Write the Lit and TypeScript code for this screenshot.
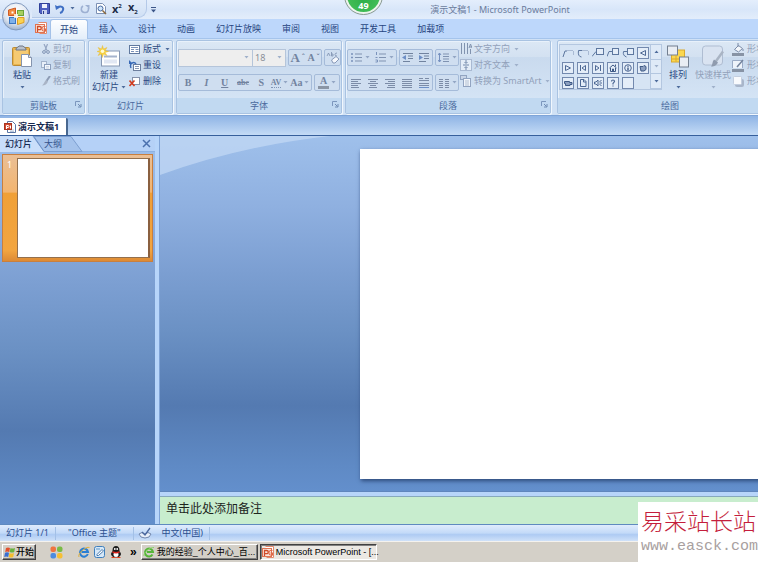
import { LitElement, html, svg, css, TemplateResult } from "lit";
import { customElement } from "lit/decorators.js";

type Art = ReturnType<typeof svg>;

const icon = (w: number, h: number, art: Art): TemplateResult =>
  html`<svg class="icon" width=${w} height=${h} viewBox="0 0 ${w} ${h}" aria-hidden="true">${art}</svg>`;

const caret = (kind = "") =>
  html`<svg class="caret ${kind}" width="5" height="3" viewBox="0 0 5 3" aria-hidden="true"><path d="M0.5 0h4L2.5 2.6z" fill="currentColor" /></svg>`;

const launcher = icon(7, 7, svg`<path d="M.5 5V.5H5" fill="none" stroke="#7c97bd"/><path d="M3 3l2.500 2.500M6 3v3H3" fill="none" stroke="#6f8bb3"/>`);

const pptIcon = icon(12, 12, svg`
  <path d="M3.500 .5h8v11h-7" fill="#fff" stroke="#e3886c"/>
  <rect x=".5" y="2.500" width="9" height="8" fill="#fbe6dd" stroke="#df7352"/>
  <path d="M2.500 10V4.500h2.200a1.600 1.600 0 0 1 0 3.200H2.500" fill="none" stroke="#cf4a28" stroke-width="1.300"/>
  <path d="M10.500 4.500a2.500 2.500 0 1 0 0 4.500V7H8.500" fill="none" stroke="#df6644" stroke-width="1.100"/>`);

const docIcon = icon(12, 12, svg`
  <path d="M3.500 .5h5l3 3v8h-8z" fill="#fff" stroke="#5a76a5"/>
  <path d="M6 9h4M6 10.500h4" stroke="#9db1d0" stroke-width=".7"/>
  <rect x=".5" y="2.500" width="7" height="6" fill="#d4492e" stroke="#a93420"/>
  <path d="M2.500 8V4.500h1.500a1 1 0 0 1 0 2H2.500M6.500 4.500v3" fill="none" stroke="#fff"/>`);

const art = {
  save: icon(11, 11, svg`<path d="M.5 .5h10v10h-9l-1-1z" fill="#4d5fc0" stroke="#2f3f98"/><rect x="3" y="1" width="5" height="4" fill="#eef2fc"/><rect x="3" y="7" width="5" height="4" fill="#c9d2ee"/><rect x="4" y="8" width="1" height="3" fill="#283a8c"/>`),
  undo: icon(10, 10, svg`<path d="M2 3.500c4-2 7-.5 6 2.500-.4 1.500-1.500 2.500-3 3" fill="none" stroke="#3f6fc4" stroke-width="2"/><path d="M0 1l1 5 4-2.500z" fill="#3f6fc4"/>`),
  redo: icon(10, 10, svg`<path d="M3 2C.5 3.500 .5 8 4.500 8.500S9 5 8 4" fill="none" stroke="#9db0d2" stroke-width="1.600"/><path d="M5 1h4.500v4z" fill="#9db0d2"/>`),
  preview: icon(12, 12, svg`<path d="M1.500 .5h6l3 3v7h-9z" fill="#fff" stroke="#7c90b4"/><circle cx="5.500" cy="5.500" r="2.500" fill="#cfe5fb" stroke="#46689e"/><path d="M7.500 7.500l3.500 3.500" stroke="#8a6a40" stroke-width="1.500"/>`),
  paste: icon(22, 23, svg`<rect x="1.500" y="2.500" width="17" height="18" rx="1" fill="#e9b44c" stroke="#ba8a35"/><rect x="3" y="5" width="14" height="14" fill="#f5ca72"/><path d="M5 4c0-1.500 2-1.500 3-3h4c1 1.500 3 1.500 3 3v1H5z" fill="#b8c0cc" stroke="#6c7583"/><path d="M10.500 9.500h7l3 3v9h-10z" fill="#fff" stroke="#8494ae"/><path d="M17.500 9.500v3h3" fill="#dbe4f2" stroke="#8494ae"/>`),
  cut: icon(10, 10, svg`<path d="M3 0l3 6.500M6.500 0L4 6.500" stroke="#95a6c2" stroke-width="1.200"/><circle cx="3" cy="8" r="1.400" fill="none" stroke="#8195b5"/><circle cx="7" cy="8" r="1.400" fill="none" stroke="#8195b5"/>`),
  copy: icon(10, 10, svg`<rect x=".5" y="1.500" width="5" height="6" fill="#e9f0f9" stroke="#a3b3cb"/><rect x="3.500" y="4.500" width="6" height="5" fill="#f3f7fc" stroke="#8c9fbd"/><path d="M5 6.500h3M5 8h3" stroke="#b3c0d4" stroke-width=".6"/>`),
  painter: icon(10, 10, svg`<path d="M9 0L5.500 5" stroke="#8d9cb5" stroke-width="2"/><path d="M5 4l2 1.500C6 8 4 9.500 1 9.500 3 8 3 6 5 4z" fill="#a9b4c6"/>`),
  newSlide: icon(24, 22, svg`<rect x="4.500" y="5.500" width="18" height="15" fill="#fff" stroke="#8798b4"/><rect x="7" y="10" width="13" height="2" fill="#a6b4cd"/><rect x="7" y="14" width="13" height="4" fill="#e1e7f3"/><path d="M5.500 0l1 3.500L10 2 8 5l3.500 1L8 7l2 3-3.500-1.500-1 3.500-1-3.500L1 10l2-3-3-1 3-1-2-3 3.500 1.500z" fill="#f7d343" stroke="#e3b32a" stroke-width=".4"/><circle cx="5.500" cy="5.800" r="1.800" fill="#fffbd5"/>`),
  layout: icon(12, 11, svg`<rect x=".5" y="1.500" width="10" height="8" fill="#fff" stroke="#60799f"/><path d="M2 3.500h7M2 5.500h3M2 7.500h3M6.500 5.500h3M6.500 7.500h3" stroke="#7890b8"/>`),
  reset: icon(12, 11, svg`<rect x="4.500" y="4.500" width="7" height="6" fill="#fff" stroke="#6d7f9e"/><path d="M6 6.500h4M6 8.500h4" stroke="#8797b4"/><path d="M2 8c-2-5 3-7 5-4" fill="none" stroke="#3768b5" stroke-width="1.400"/><path d="M0 0v4h4z" fill="#3768b5"/>`),
  remove: icon(12, 11, svg`<rect x="3.500" y="1.500" width="7" height="7" fill="#fff" stroke="#8592ab"/><path d="M0.500 4.500l5 5.500M5.500 4.500l-5 5.500" stroke="#d23c1e" stroke-width="1.600"/>`),
  eraser: icon(14, 13, svg`<path d="M1 5l1.500-3L4 5M5.500 1v4h1.500V3H5.500M11 2q-2 0-2 1.500T11 5" stroke="#7c8faf" fill="none" stroke-width=".8"/><path d="M5.500 9L10 5.500l3 2.500-4 4H7z" fill="#f6f8fc" stroke="#8799b8"/>`),
  bullets: icon(12, 11, svg`<path d="M0 2h2M0 5.500h2M0 9h2" stroke="#7b93bb" stroke-width="1.600"/><path d="M4 2h7M4 5.500h7M4 9h7" stroke="#8093b1"/>`),
  numbers: icon(12, 11, svg`<path d="M1.500 0v3M.5 5.500h2M.5 8h2v2h-2" fill="none" stroke="#7b93bb"/><path d="M4 2h7M4 5.500h7M4 9h7" stroke="#8093b1"/>`),
  indentLess: icon(12, 11, svg`<path d="M1 1.500h10M6 4h5M6 6.500h5M1 9.500h7" stroke="#71839f" stroke-width="1.200"/><path d="M4 3v5L0 5.500z" fill="#6d8fc6"/>`),
  indentMore: icon(12, 11, svg`<path d="M1 1.500h10M6 4h5M6 6.500h5M1 9.500h7" stroke="#71839f" stroke-width="1.200"/><path d="M1 3v5l4-2.500z" fill="#6d8fc6"/>`),
  spacing: icon(12, 11, svg`<path d="M1.500 1v9M0 3l1.500-2L3 3M0 8l1.500 2L3 8" fill="none" stroke="#7590bf"/><path d="M5 2h6M5 4.500h6M5 7h6M5 9.500h6" stroke="#8093b1"/>`),
  alignLeft: icon(12, 10, svg`<path d="M1 1.500h10M1 3.500h7M1 5.500h10M1 7.500h7M1 9.500h8" stroke="#7c8ca7"/>`),
  alignCenter: icon(12, 10, svg`<path d="M1 1.500h10M3 3.500h6M1 5.500h10M3 7.500h6M2 9.500h8" stroke="#7c8ca7"/>`),
  alignRight: icon(12, 10, svg`<path d="M1 1.500h10M4 3.500h7M1 5.500h10M4 7.500h7M3 9.500h8" stroke="#7c8ca7"/>`),
  justify: icon(12, 10, svg`<path d="M1 1.500h10M1 3.500h10M1 5.500h10M1 7.500h10M1 9.500h10" stroke="#7c8ca7"/>`),
  distribute: icon(12, 10, svg`<path d="M1 .5h4M7 .5h4M1 2.500h10M1 5.500h10M1 7.500h10" stroke="#7c8ca7"/><path d="M1 9.500h10" stroke="#6d8fc6"/>`),
  columns: icon(12, 10, svg`<path d="M1 1.500h4M1 3.500h4M1 5.500h4M1 7.500h4M1 9.500h4M7 1.500h4M7 3.500h4M7 5.500h4M7 7.500h4M7 9.500h4" stroke="#7c8ca7"/>`),
  textDir: icon(12, 12, svg`<path d="M1.500 0v11M4.500 0v11M7.500 0v11" stroke="#8193af"/><path d="M10.500 11V6M9 5l1.500-4L12 5M9.500 4h2" fill="none" stroke="#8193af"/>`),
  alignText: icon(12, 12, svg`<rect x=".5" y=".5" width="11" height="11" fill="#e4edf8" stroke="#a9b9d2"/><path d="M6 1v3M4.500 3L6 4.500 7.500 3M3 6h6M6 11V8M4.500 9L6 7.500 7.500 9" fill="none" stroke="#7389ab"/>`),
  smartArt: icon(12, 12, svg`<rect x=".5" y=".5" width="6" height="4" fill="#c9d5e7" stroke="#92a4c1"/><rect x="3.500" y="3.500" width="7" height="8" fill="#f1f5fb" stroke="#92a4c1"/><path d="M5 6h4M5 8h4M5 10h4" stroke="#a2b1c8" stroke-width=".8"/>`),
  arrange: icon(24, 24, svg`<rect x="5.500" y="5.500" width="13" height="12" fill="#fbd74f" stroke="#d9a92e"/><rect x="1.500" y="1.500" width="10" height="9" fill="#e9edf3" stroke="#737f90"/><rect x="13.500" y="12.500" width="9" height="10" fill="#e9edf3" stroke="#737f90"/><path d="M6 14.500h7M10 11v6" stroke="#d9a92e"/><path d="M3 16h3v3H3z" fill="#cfdef0" opacity="0"/>`),
  styles: icon(24, 24, svg`<rect x="1.500" y="1.500" width="20" height="19" rx="3" fill="#d9e3f1" stroke="#afbdd2"/><path d="M22 7l-8 11" stroke="#a9b4c4" stroke-width="2.500"/><path d="M13 15l4 3c-2 4-5 4-7 4 2-2 1-5 3-7z" fill="#8f9bae"/>`),
  fill: icon(13, 13, svg`<path d="M2.500 6.500l4-4 4 3-4 3.500z" fill="#f4f7fb" stroke="#7a8ba8"/><path d="M6 0v4M11 6v2" stroke="#7a8ba8"/><rect x="0" y="10" width="12" height="3" fill="#8793a5"/>`),
  outline: icon(13, 13, svg`<path d="M.5 9V1.500h10V9" fill="#eef3fa" stroke="#9aabc6"/><path d="M11 1L5 8" stroke="#74849e" stroke-width="1.500"/><rect x="0" y="10" width="12" height="3" fill="#8793a5"/>`),
  effects: icon(13, 13, svg`<rect x="3" y="4" width="9" height="8" rx="2" fill="#a9b6ca"/><rect x="1.500" y="1.500" width="8" height="8" rx="1" fill="#f8fafd" stroke="#c3cedf"/>`),
  close: icon(9, 9, svg`<path d="M1 1l7 7M8 1L1 8" stroke="#4a70ad" stroke-width="1.500"/>`),
  spell: icon(14, 12, svg`<path d="M1 7q3-3 6 0 3-3 6 0-1 4-6 4T1 7z" fill="#e8effa" stroke="#7086ad"/><path d="M4 5l3 3 5-7" fill="none" stroke="#4a679e" stroke-width="1.300"/>`),
  flag: icon(12, 12, svg`<path d="M2 2q2-1 4 0l-.8 4q-2-1-4 0z" fill="#e2502c"/><path d="M6.500 2q2 1 4.500 0l-.8 4q-2 1-4.500 0z" fill="#6ab23c"/><path d="M1 6.800q2-1 4 0L4.200 11q-2-1-4 0z" fill="#3a6fd0"/><path d="M5.500 7q2 1 4.500 0l-.8 4q-2 1-4.500 0z" fill="#f3bd2c"/>`),
  clover: icon(13, 13, svg`<rect x=".5" y=".5" width="5.500" height="5.500" rx="2" fill="#ef7440"/><rect x="7" y=".5" width="5.500" height="5.500" rx="2" fill="#79bb45"/><rect x=".5" y="7" width="5.500" height="5.500" rx="2" fill="#4d8ce0"/><rect x="7" y="7" width="5.500" height="5.500" rx="2" fill="#f6bf34"/>`),
  ie: icon(12, 12, svg`<path d="M9.800 8A4 4 0 1 1 10 6H3.500" fill="none" stroke="#2a7fd4" stroke-width="2"/><path d="M1 11C-1 8 8 0 11.500 1.500" fill="none" stroke="#e3b23a"/>`),
  desktop: icon(12, 12, svg`<rect x=".5" y=".5" width="10" height="11" rx="2" fill="#d6e8f8" stroke="#3e7fbd"/><path d="M3 8.500l5-5 1.500 1.500-5 4.500H3z" fill="#fff" stroke="#4779ac"/><path d="M2 3h4" stroke="#5f97c9"/>`),
  qq: icon(12, 12, svg`<ellipse cx="6" cy="4.500" rx="3.500" ry="4.500" fill="#1c1c1c"/><ellipse cx="6" cy="8" rx="5" ry="3.500" fill="#1c1c1c"/><ellipse cx="6" cy="8.500" rx="2.500" ry="2.500" fill="#fff"/><path d="M2.500 6q3.500 1.500 7 0" fill="none" stroke="#d8241c" stroke-width="1.600"/><circle cx="4.800" cy="3" r=".9" fill="#fff"/><circle cx="7.200" cy="3" r=".9" fill="#fff"/><path d="M1.500 11.500h4M6.500 11.500h4" stroke="#e9421f" stroke-width="1.200"/>`),
  greenE: icon(12, 12, svg`<path d="M9.500 8.500A4 4 0 1 1 10 6H4" fill="none" stroke="#56b53a" stroke-width="2"/><path d="M1 10C0 7 7 1 11 1.500" fill="none" stroke="#8bd36c"/>`),
};

const shapeArt: Art[] = [
  svg`<path d="M1 10l2-6h2" fill="none" stroke="#5d779f"/><path d="M5 3.500h6M11.500 4v4" fill="none" stroke="#a9bad3"/>`,
  svg`<path d="M5 3.500H1.500q-1 6 3 6.500" fill="none" stroke="#5d779f"/><path d="M5 3.500h6M11.500 4v4" fill="none" stroke="#a9bad3"/>`,
  svg`<path d="M0 9.500l4-5" stroke="#5d779f"/><rect x="4.500" y="1.500" width="7" height="6" fill="#e4edf8" stroke="#5d779f"/>`,
  svg`<path d="M0 9.500l2-5h3" fill="none" stroke="#5d779f"/><rect x="5.500" y="1.500" width="6" height="6" fill="#e4edf8" stroke="#5d779f"/>`,
  svg`<path d="M5 4.500H1.500q-1 4 3 5.500" fill="none" stroke="#5d779f"/><rect x="5.500" y="1.500" width="6" height="6" fill="#e4edf8" stroke="#5d779f"/>`,
  svg`<path d="M8.500 3.500v5L3.500 6z" fill="none" stroke="#4d6894"/>`,
  svg`<path d="M3.500 3.500v5l5-2.500z" fill="none" stroke="#4d6894"/>`,
  svg`<path d="M3.500 3v6M8.500 3.500v5L5 6z" fill="none" stroke="#4d6894"/>`,
  svg`<path d="M8.500 3v6M3.500 3.500v5L7 6z" fill="none" stroke="#4d6894"/>`,
  svg`<path d="M2.500 6L6 3l3.500 3M3.500 6v3.500h5V6M8.500 2.500v2M5.500 9V7h1v2" fill="none" stroke="#3f5a86"/>`,
  svg`<circle cx="6" cy="6" r="3.300" fill="none" stroke="#4d6894"/><path d="M6 3.800v1M6 5.500v3" stroke="#3f5a86" stroke-width="1.400"/>`,
  svg`<path d="M3 4.500h3l1-1 2 1v3L7 9H4z" fill="#8c9fbf" stroke="#3f5a86"/>`,
  svg`<path d="M2.500 4.500h5v1H10v2H8v1H3.500v-2h-1z" fill="#8c9fbf" stroke="#3f5a86"/>`,
  svg`<path d="M3.500 2.500h3.500l2 2v5H3.500zM6.500 3v2H9" fill="none" stroke="#4d6894"/>`,
  svg`<path d="M2.500 5h1.500l2-2v6l-2-2H2.500zM7.500 4.500l2-1M7.500 6H10M7.500 7.500l2 1" fill="none" stroke="#4d6894"/>`,
  svg`<path d="M4.500 4.500q0-1.500 1.500-1.500t1.500 1.500L6 6.500V7.500M6 8.500v1" fill="none" stroke="#4d6894" stroke-width="1.200"/>`,
  svg``,
];

const tabs = ["插入", "设计", "动画", "幻灯片放映", "审阅", "视图", "开发工具", "加载项"];

@customElement("office-group")
class OfficeGroup extends LitElement {
  static properties = { label: {}, launch: { type: Boolean } };
  declare label: string;
  declare launch: boolean;
  static styles = css`
    :host {
      box-sizing: border-box;
      display: flex;
      flex-direction: column;
      flex: none;
      border: 1px solid #a9c3e2;
      border-radius: 2px;
      box-shadow: 1px 1px 0 #f1f7fd, inset 1px 1px 0 #e8f1fb;
      background: linear-gradient(#dce8f5 0, #d3e1f1 22%, #c9daee 23%, #d8e7f7 100%);
    }
    .body {
      flex: 1;
      display: flex;
      min-height: 0;
    }
    .foot {
      display: flex;
      align-items: center;
      height: 15px;
      background: #c1d9f1;
      color: #4a6a9e;
      line-height: 15px;
    }
    .name {
      flex: 1;
      text-align: center;
      white-space: nowrap;
    }
    .launch {
      border: 0;
      padding: 0 2px 3px 0;
      margin-left: -9px;
      background: none;
      display: flex;
    }
  `;
  render() {
    return html`<div class="body"><slot></slot></div>
      <div class="foot">
        <span class="name">${this.label}</span>
        ${this.launch ? html`<button class="launch" aria-label=${this.label}>${launcher}</button>` : ""}
      </div>`;
  }
}

@customElement("app-root")
class AppRoot extends LitElement {
  static styles = css`
    :host {
      display: flex;
      flex-direction: column;
      position: relative;
      height: 100vh;
      overflow: hidden;
      font: 9px/12px "Noto Sans", "Noto Sans CJK SC", sans-serif;
      color: #2b4a82;
      background: #bfdbff;
    }
    * {
      box-sizing: border-box;
    }
    button,
    select {
      font: inherit;
      color: inherit;
      border: 0;
      padding: 0;
      margin: 0;
      background: none;
      white-space: nowrap;
    }
    button {
      display: flex;
      align-items: center;
    }
    .icon,
    .caret {
      display: block;
      flex: none;
    }
    .caret {
      color: #4f6c9c;
    }
    .caret.dim {
      color: #9fb0ca;
    }
    .title-bar {
      display: flex;
      height: 19px;
      background: linear-gradient(#e4eefc, #d8e6f9 50%, #e3edfb);
    }
    .quick {
      display: flex;
      align-items: center;
      gap: 5px;
      margin-left: 32px;
      padding: 0 7px;
      height: 18px;
      border: 1px solid #b4c9e8;
      border-top: 0;
      border-left: 0;
      border-radius: 0 0 9px 0;
      background: linear-gradient(#e2ecfa, #d0e0f5);
    }
    .script {
      display: block;
      width: 11px;
      text-align: left;
      font-weight: 700;
      font-size: 11px;
      color: #1c2b48;
    }
    .script sup,
    .script sub {
      font-size: 6px;
      line-height: 6px;
    }
    .more {
      padding: 0 4px;
    }
    .caption {
      flex: 1;
      margin: 0;
      padding-left: 82px;
      text-align: center;
      font-size: 9px;
      font-weight: 400;
      line-height: 20px;
      color: #6b7c9c;
    }
    .orb {
      position: absolute;
      left: 1px;
      top: 1px;
      z-index: 2;
    }
    .badge {
      position: absolute;
      left: 345px;
      top: -23px;
      width: 37px;
      height: 37px;
      display: flex;
      align-items: flex-end;
      justify-content: center;
      border: 2px solid #eef5ee;
      border-radius: 50%;
      outline: 1px solid #8a9a90;
      background: radial-gradient(circle at 50% 60%, #2fae4a, #4cc85e);
      color: #fff;
      font-weight: 700;
      z-index: 2;
    }
    .tabs {
      display: flex;
      align-items: stretch;
      gap: 1px;
      height: 20px;
      padding-left: 35px;
      background: #bdd7fb;
      border-bottom: 1px solid #a5c4ec;
    }
    .tab {
      padding: 0 10px;
      color: #26457f;
    }
    .tab.doc {
      width: 14px;
      padding: 0 0 2px;
    }
    .tab.on {
      position: relative;
      margin-bottom: -1px;
      border: 1px solid #a3c1e8;
      border-bottom: 0;
      border-radius: 3px 3px 0 0;
      padding: 0 9px;
      background: linear-gradient(#fdfeff, #e3eefa);
    }
    .ribbon {
      display: flex;
      gap: 3px;
      height: 77px;
      padding: 1px 0 1px 2px;
      background: #d0e1f5;
      border-bottom: 1px solid #7fa5d8;
      overflow: hidden;
    }
    .g-clip { width: 83px; }
    .g-slides { width: 85px; }
    .g-font { width: 166px; }
    .g-para { width: 206px; margin-right: 3px; }
    .g-draw { width: 226px; }
    .dim {
      color: #92a1ba;
    }
    .big {
      flex-direction: column;
      width: 38px;
      flex: none;
      padding-top: 3px;
    }
    .big .icon {
      height: 25px;
    }
    .big .line {
      display: flex;
      align-items: center;
      gap: 2px;
      height: 12px;
    }
    .big.wide {
      width: 40px;
    }
    .big.narrow {
      width: 32px;
    }
    .stack {
      display: flex;
      flex-direction: column;
    }
    .stack button {
      height: 16px;
      gap: 2px;
    }
    .stack .caret {
      margin-left: 2px;
    }
    .fields {
      display: flex;
      flex-direction: column;
      padding: 8px 1px 0 1px;
      gap: 8px;
    }
    .row {
      display: flex;
      align-items: center;
      gap: 2px;
      height: 17px;
    }
    .combo {
      display: flex;
      align-items: center;
      height: 18px;
      padding-right: 3px;
      border: 1px solid #b5c5da;
      background: #eeeeee;
      color: #8a8f98;
    }
    .combo + .combo {
      margin-left: -3px;
    }
    .combo select {
      appearance: none;
      flex: 1;
      min-width: 0;
      padding-left: 2px;
      font-size: 9px;
    }
    .face { width: 75px; }
    .size { width: 34px; }
    .box {
      display: flex;
      align-items: center;
      justify-content: space-around;
      height: 17px;
      border: 1px solid #a5bbd9;
      border-radius: 2px;
      background: #cfdef0;
      color: #72839f;
      font: 700 10px/14px "Liberation Serif", serif;
    }
    .box button {
      gap: 2px;
      justify-content: center;
    }
    .box button .caret {
      color: #93a6c4;
    }
    .w17 { width: 17px; }
    .w24 { width: 24px; }
    .w26 { width: 26px; }
    .w34 { width: 34px; }
    .w50 { width: 50px; }
    .w86 { width: 86px; }
    .w134 { width: 134px; }
    .w134 button {
      width: 18px;
    }
    .w134 button.wider {
      width: 22px;
    }
    .italic { font-style: italic; }
    .under { text-decoration: underline; }
    .strike { text-decoration: line-through; }
    .small { font-size: 8px; }
    .large { font-size: 13px; }
    .spaced { border-bottom: 1px dotted #8195b5; line-height: 9px; }
    .tinted { border-bottom: 3px solid #8a95a5; line-height: 10px; padding: 0 2px; }
    .gallery {
      display: flex;
      flex: none;
      margin: 3px 0 8px 1px;
      border: 1px solid #b4c7e0;
      background: #d6e4f4;
    }
    .shapes {
      display: grid;
      grid-template-columns: repeat(6, 15px);
      grid-auto-rows: 15px;
    }
    .shape {
      justify-content: center;
    }
    .framed {
      width: 12px;
      height: 12px;
      margin: auto;
      border: 1px solid #7389ae;
      background: #e4edf8;
    }
    .scroll {
      display: grid;
      grid-template-rows: repeat(3, 1fr);
      width: 11px;
      border-left: 1px solid #b4c7e0;
    }
    .scroll button {
      justify-content: center;
      border-bottom: 1px solid #b4c7e0;
      background: #dfeaf7;
    }
    .flip { transform: rotate(180deg); }
    .documents {
      display: flex;
      height: 20px;
      padding-top: 2px;
      background: linear-gradient(#8fb4e5, #c4dbf6);
      border-bottom: 1px solid #365f9c;
    }
    .document {
      gap: 2px;
      padding: 0 7px 0 4px;
      border-right: 2px solid #48678f;
      border-radius: 0 2px 0 0;
      background: #fff;
      color: #14284f;
      font-weight: 700;
    }
    .work {
      flex: 1;
      display: flex;
      min-height: 0;
      background: #b7d5fa;
    }
    .side,
    .canvas {
      background: linear-gradient(#9fc0eb 0, #8fb0e0 20%, #7c9fd2 38%, #6b91c4 55%, #547ab1 76%, #5f8ac5 93%, #638fcc 100%);
    }
    .side {
      flex: none;
      width: 155px;
    }
    .pane-tabs {
      position: relative;
      display: flex;
      height: 16px;
      background: #b5d1f7;
      border-bottom: 1px solid #8eb2e2;
    }
    .pane-shape {
      position: absolute;
      left: 0;
      top: 0;
    }
    .pane-tab {
      position: relative;
      width: 39px;
      padding-left: 5px;
      color: #14284f;
      font-weight: 500;
    }
    .pane-tab.off {
      color: #35538c;
      font-weight: 400;
    }
    .pane-close {
      margin: 0 4px 0 auto;
    }
    .thumb {
      display: flex;
      gap: 4px;
      width: 151px;
      height: 108px;
      margin: 2px 0 0 2px;
      padding: 3px 2px 3px 4px;
      border: 1px solid #c97f3e;
      align-items: stretch;
      background: linear-gradient(#eabf95 0, #f3b570 35%, #f0a037 36%, #f2a540 90%, #dd8a35 100%);
      color: #fff;
    }
    .thumb .number {
      width: 6px;
      padding-top: 1px;
      text-align: left;
      align-self: flex-start;
    }
    .thumb .page {
      flex: 1;
      align-self: stretch;
      background: #fff;
      border: 1px solid #93704e;
      border-right: 2px solid #8a6040;
    }
    .edit {
      flex: 1;
      min-width: 0;
      display: flex;
      flex-direction: column;
      margin-left: 4px;
      border-left: 1px solid #7fa3d6;
    }
    .canvas {
      position: relative;
      flex: 1;
      min-height: 0;
      overflow: hidden;
      padding: 13px 0 12px 200px;
      border-bottom: 1px solid #5f86bd;
    }
    .sheen {
      position: absolute;
      left: 0;
      top: 0;
    }
    .slide {
      position: relative;
      height: 100%;
      aspect-ratio: 4 / 3;
      background: #fff;
      box-shadow: 1px 2px 4px #2d4a7a;
    }
    .notes {
      display: block;
      flex: none;
      height: 28px;
      margin: 4px 0 0;
      padding: 4px 6px;
      border: 0;
      border-top: 1px solid #86a9bd;
      border-radius: 0;
      resize: none;
      outline: 0;
      overflow: hidden;
      background: #c8edce;
      font: 12px/16px "Noto Sans", "Noto Sans CJK SC", sans-serif;
      color: #1c241d;
    }
    .notes::placeholder {
      color: #1c241d;
      opacity: 1;
    }
    .status {
      display: flex;
      align-items: center;
      height: 17px;
      border-top: 1px solid #5f8abf;
      background: linear-gradient(#e0ecfd, #c3daf8 50%, #aecbf3 60%, #cfe1f9);
      color: #2b4f8f;
    }
    .cell {
      display: flex;
      align-items: center;
      gap: 10px;
      height: 13px;
      padding: 0 6px;
      border-right: 1px solid #a3c0e6;
    }
    .cell.roomy {
      padding: 0 12px;
    }
    .cell:last-child {
      padding-left: 4px;
    }
    .taskbar {
      display: flex;
      align-items: center;
      height: 21px;
      padding: 1px 2px;
      border-top: 1px solid #f4f2ee;
      background: #d4d0c8;
      color: #000;
      font-family: "Liberation Sans", "Noto Sans CJK SC", sans-serif;
    }
    .key {
      height: 16px;
      padding: 0 1px;
      border: 1px solid;
      border-color: #fff #404040 #404040 #fff;
      box-shadow: inset -1px -1px 0 #808080;
      background: #d4d0c8;
    }
    .start {
      font-weight: 500;
    }
    .task {
      width: 117px;
      gap: 2px;
      margin-right: 2px;
    }
    .task.down {
      border-color: #404040 #fff #fff #404040;
      box-shadow: inset 1px 1px 0 #808080;
      background: #ebe8e3;
    }
    .launchers {
      display: flex;
      align-items: center;
      gap: 4px;
      margin: 0 4px 0 14px;
    }
    .launchers .first {
      margin-right: 11px;
    }
    .chev {
      font-size: 12px;
      padding-left: 4px;
      font-weight: 700;
    }
    .mark {
      position: absolute;
      right: 0;
      bottom: 0;
      width: 120px;
      height: 60px;
      padding: 4px 0 0 3px;
      overflow: hidden;
      white-space: nowrap;
      background: #fff;
      z-index: 3;
    }
    .mark .site {
      font: 300 23px/28px "Noto Sans CJK SC", sans-serif;
      color: #c41e3c;
    }
    .mark .url {
      display: block;
      font: 15px/26px "Liberation Mono", monospace;
      color: #a8a0a0;
      text-decoration: none;
    }
  `;

  private tool(label: string, art: TemplateResult, drop = false) {
    return html`<button aria-label=${label}>${art}${drop ? caret() : ""}</button>`;
  }

  private command(label: string, art: TemplateResult, dim = false, drop = false) {
    return html`<button class=${dim ? "dim" : ""}>${art}<span>${label}</span>${drop ? caret(dim ? "dim" : "") : ""}</button>`;
  }

  render() {
    return html`
      <button class="orb" aria-label="Office">
        <svg width="31" height="31" viewBox="0 0 31 31" aria-hidden="true">
          <defs>
            <radialGradient id="glass" cx=".5" cy=".3" r=".75">
              <stop offset="0" stop-color="#fff" /><stop offset=".6" stop-color="#dfe6f0" /><stop offset="1" stop-color="#8fa6c6" />
            </radialGradient>
          </defs>
          <circle cx="15" cy="15.500" r="13.500" fill="url(#glass)" stroke="#8199be" />
          <path d="M7.500 9l7-2v7.500h-7z" fill="#f08b3c" stroke="#cf5a26" />
          <rect x="16.500" y="9.500" width="6" height="5" fill="#a8cf5e" stroke="#6ba43a" />
          <rect x="8.500" y="16.500" width="6" height="6" fill="#7fb1ea" stroke="#3a76c2" />
          <path d="M16.500 16.500h6.500v5l-6.500 2z" fill="#fbd250" stroke="#dd9d22" />
          <rect x="10.500" y="10.500" width="2" height="2" fill="#fff" />
          <rect x="13" y="13" width="4" height="4" fill="#fffbe9" opacity=".8" />
        </svg>
      </button>
      <div class="badge">49</div>

      <header class="title-bar">
        <div class="quick">
          ${this.tool("保存", art.save)} ${this.tool("撤消", art.undo)}
          <button aria-label="撤消列表">${caret()}</button>
          ${this.tool("恢复", art.redo)} ${this.tool("打印预览", art.preview)}
          <button class="script">x<sup>2</sup></button>
          <button class="script">x<sub>2</sub></button>
        </div>
        <button class="more" aria-label="自定义">
          ${icon(5, 6, svg`<path d="M0 .5h5" stroke="#3c5688"/><path d="M0 2.500h5L2.500 5.500z" fill="#3c5688"/>`)}
        </button>
        <h1 class="caption">演示文稿1 - Microsoft PowerPoint</h1>
      </header>

      <nav class="tabs">
        <button class="tab doc" aria-label="PowerPoint">${pptIcon}</button>
        <button class="tab on">开始</button>
        ${tabs.map((t) => html`<button class="tab">${t}</button>`)}
      </nav>

      <div class="ribbon">
        <office-group class="g-clip" label="剪贴板" launch>
          <button class="big">${art.paste}<span class="line">粘贴</span><span class="line">${caret()}</span></button>
          <div class="stack">
            ${this.command("剪切", art.cut, true)} ${this.command("复制", art.copy, true)} ${this.command("格式刷", art.painter, true)}
          </div>
        </office-group>

        <office-group class="g-slides" label="幻灯片">
          <button class="big wide">${art.newSlide}<span class="line">新建</span><span class="line">幻灯片${caret()}</span></button>
          <div class="stack">
            ${this.command("版式", art.layout, false, true)} ${this.command("重设", art.reset)} ${this.command("删除", art.remove)}
          </div>
        </office-group>

        <office-group class="g-font" label="字体" launch>
          <div class="fields">
            <div class="row">
              <div class="combo face"><select aria-label="字体"><option></option></select>${caret("dim")}</div>
              <div class="combo size"><select aria-label="字号"><option>18</option></select>${caret("dim")}</div>
              <div class="box w34"><button class="large">A<span class="small">ˆ</span></button><button>A<span class="small">ˇ</span></button></div>
              <div class="box w17">${this.tool("清除格式", art.eraser)}</div>
            </div>
            <div class="row">
              <div class="box w134">
                <button>B</button><button class="italic">I</button><button class="under">U</button>
                <button class="strike small">abc</button><button>S</button>
                <button class="small"><span class="spaced">AV</span>${caret()}</button><button class="wider">Aa${caret()}</button>
              </div>
              <div class="box w26"><button><span class="tinted">A</span>${caret()}</button></div>
            </div>
          </div>
        </office-group>

        <office-group class="g-para" label="段落" launch>
          <div class="fields">
            <div class="row">
              <div class="box w50">${this.tool("项目符号", art.bullets, true)}${this.tool("编号", art.numbers, true)}</div>
              <div class="box w34">${this.tool("减少缩进", art.indentLess)}${this.tool("增加缩进", art.indentMore)}</div>
              <div class="box w24">${this.tool("行距", art.spacing, true)}</div>
            </div>
            <div class="row">
              <div class="box w86">
                ${this.tool("左对齐", art.alignLeft)}${this.tool("居中", art.alignCenter)}${this.tool("右对齐", art.alignRight)}${this.tool("两端对齐", art.justify)}${this.tool("分散对齐", art.distribute)}
              </div>
              <div class="box w24">${this.tool("分栏", art.columns, true)}</div>
            </div>
          </div>
          <div class="stack">
            ${this.command("文字方向", art.textDir, true, true)} ${this.command("对齐文本", art.alignText, true, true)}
            ${this.command("转换为 SmartArt", art.smartArt, true, true)}
          </div>
        </office-group>

        <office-group class="g-draw" label="绘图" launch>
          <div class="gallery">
            <div class="shapes">
              ${shapeArt.map((a, i) => html`<button class="shape" aria-label="形状 ${i + 1}">
                  <svg class=${i > 4 ? "framed" : ""} width="12" height="12" viewBox=${i > 4 ? "1 1 10 10" : "0 0 12 12"} aria-hidden="true">${a}</svg>
                </button>`)}
            </div>
            <div class="scroll">
              <button aria-label="向上">${caret("flip")}</button>
              <button aria-label="向下">${caret("dim")}</button>
              <button aria-label="更多">${caret()}</button>
            </div>
          </div>
          <button class="big narrow">${art.arrange}<span class="line">排列</span><span class="line">${caret()}</span></button>
          <button class="big dim">${art.styles}<span class="line">快速样式</span><span class="line">${caret("dim")}</span></button>
          <div class="stack">
            ${this.command("形状填充", art.fill, true, true)} ${this.command("形状轮廓", art.outline, true, true)}
            ${this.command("形状效果", art.effects, true, true)}
          </div>
        </office-group>
      </div>

      <div class="documents"><button class="document">${docIcon}演示文稿1</button></div>

      <main class="work">
        <aside class="side">
          <div class="pane-tabs">
            <svg class="pane-shape" width="90" height="16" viewBox="0 0 90 16" aria-hidden="true">
              <path d="M34 .5H71L82 15.500H44z" fill="#a5c3ec" stroke="#7d9fd0" />
              <path d="M0 0H33L44 16H0z" fill="#c9defa" />
              <path d="M33 0L44 15.500" stroke="#6f93c8" />
            </svg>
            <button class="pane-tab">幻灯片</button><button class="pane-tab off">大纲</button>
            <button class="pane-close" aria-label="关闭">${art.close}</button>
          </div>
          <button class="thumb"><span class="number">1</span><span class="page"></span></button>
        </aside>
        <section class="edit">
          <div class="canvas">
            <svg class="sheen" width="200" height="40" viewBox="0 0 200 40" aria-hidden="true">
              <path d="M0 0H170Q80 10 0 39z" fill="#c4daf5" opacity=".7" />
            </svg>
            <div class="slide"></div>
          </div>
          <textarea class="notes" aria-label="备注" placeholder="单击此处添加备注"></textarea>
        </section>
      </main>

      <footer class="status">
        <span class="cell">幻灯片 1/1</span><span class="cell roomy">"Office 主题"</span>
        <span class="cell">${art.spell}中文(中国)</span>
      </footer>

      <div class="taskbar">
        <button class="key start">${art.flag}开始</button>
        <div class="launchers">
          <button class="first" aria-label="Office">${art.clover}</button>
          ${this.tool("Internet Explorer", art.ie)} ${this.tool("显示桌面", art.desktop)} ${this.tool("QQ", art.qq)}
          <button class="chev">»</button>
        </div>
        <button class="key task">${art.greenE}<span>我的经验_个人中心_百...</span></button>
        <button class="key task down">${pptIcon}<span>Microsoft PowerPoint - [...</span></button>
      </div>

      <div class="mark">
        <div class="site">易采站长站</div>
        <a class="url" href="#">www.easck.com</a>
      </div>
    `;
  }
}
